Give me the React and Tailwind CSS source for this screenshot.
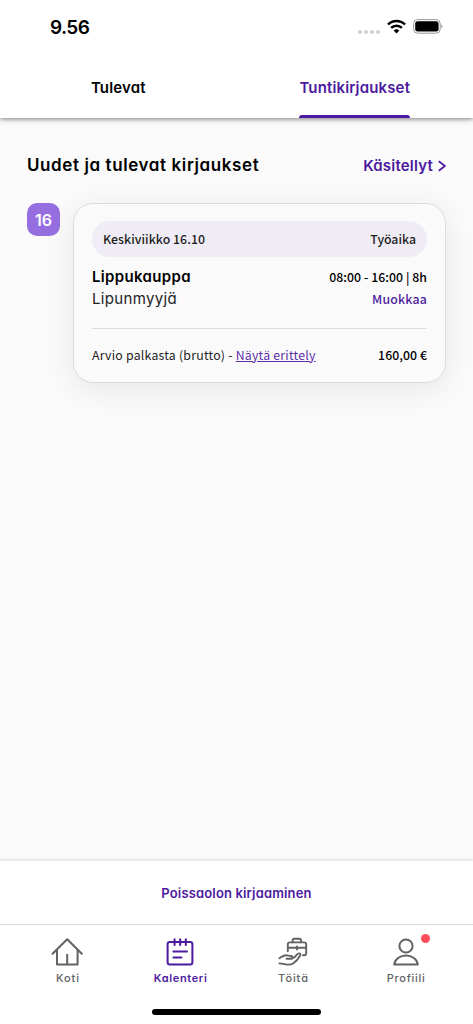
import React, { useState } from 'react';

const TABS = [
  { id: 'upcoming', label: 'Tulevat' },
  { id: 'entries', label: 'Tuntikirjaukset' }
];

const HomeIcon = () => (
  <svg width="32" height="28" viewBox="0 0 32 28" fill="none" stroke="currentColor" strokeWidth="2" strokeLinecap="round" strokeLinejoin="round">
    <path d="M1.6 15.8 16.2 1.2 30.8 15.8" />
    <path d="M6 12v14.4h20.6V12" />
    <path d="M16.2 16.8v9.4" />
  </svg>
);

const CalendarIcon = () => (
  <svg width="28" height="28" viewBox="0 0 28 28" fill="none" stroke="currentColor" strokeWidth="2" strokeLinecap="round" strokeLinejoin="round">
    <rect x="1.6" y="4" width="24.8" height="22.4" rx="2.2" />
    <path d="M8.6 1.2v5.8M14.2 1.2v5.8M19.8 1.2v5.8" />
    <path d="M7.4 13.6h13.6M7.4 19.4h8" />
  </svg>
);

const WorkIcon = () => (
  <svg width="30" height="30" viewBox="0 0 30 30" fill="none" stroke="currentColor" strokeWidth="1.9" strokeLinecap="round" strokeLinejoin="round">
    <path d="M9.8 14.2V7.4a2 2 0 0 1 2-2h14.4a2 2 0 0 1 2 2v8.8a2 2 0 0 1-2 2H25" />
    <path d="M14.6 5.2V3.4a1.6 1.6 0 0 1 1.6-1.6h5.2A1.6 1.6 0 0 1 23 3.4v1.8" />
    <path d="M10 10.8h18M19 9.4v3" />
    <path d="M1.4 21.2c2.6-1.8 4.4-3 6.8-3 2 0 2.6.8 5 .8 1.6 0 1.8 2.8-.8 2.8H8.6" />
    <path d="M13.8 21.6c2-.6 3.2-1.6 4.2-3 1.2-1.8 2.2-2.4 3.4-2.2 1.2.2 1.2 1.4.6 2.4-1.8 3.4-3.8 5.6-6.6 7.4-2.6 1.6-4.6 1.8-7.6 1.2-2-.4-3.8-1-6.4-1" />
  </svg>
);

const ProfileIcon = () => (
  <svg width="26" height="28" viewBox="0 0 26 28" fill="none" stroke="currentColor" strokeWidth="2" strokeLinejoin="round">
    <circle cx="13" cy="8" r="6.6" />
    <path d="M1.2 26.4C2 21.2 6.8 17.6 13 17.6s11 3.6 11.8 8.8z" />
  </svg>
);

const NAV_ITEMS = [
  { id: 'home', label: 'Koti', icon: HomeIcon, text: 'font-medium tracking-[0.9px]' },
  { id: 'calendar', label: 'Kalenteri', icon: CalendarIcon, text: 'font-semibold tracking-[0.65px]' },
  { id: 'work', label: 'Töitä', icon: WorkIcon, text: 'font-medium tracking-[0.9px]' },
  { id: 'profile', label: 'Profiili', icon: ProfileIcon, text: 'font-medium tracking-[0.7px]', badge: true }
];

const StatusBar = () => (
  <div className="h-[58px] shrink-0 flex items-start justify-between pl-[50px] pr-[30px]">
    <span className="mt-[14px] font-['Inter',sans-serif] text-[19px] leading-7 font-semibold tracking-[-0.6px] text-black">9.56</span>
    <div className="mt-[19px] flex items-center">
      <svg width="22" height="4" viewBox="0 0 22 4" className="mt-[10px]" fill="#cfcfcf">
        <circle cx="2" cy="2" r="2" />
        <circle cx="8" cy="2" r="2" />
        <circle cx="14" cy="2" r="2" />
        <circle cx="20" cy="2" r="2" />
      </svg>
      <svg width="19" height="15" viewBox="0 0 18 14" className="ml-[7px]" fill="none" stroke="#000" strokeWidth="2.3">
        <path d="M.9 5.1a11.6 11.6 0 0 1 16.2 0" />
        <path d="M3.9 8.4a7.3 7.3 0 0 1 10.2 0" />
        <path d="M6.3 10.9a3.9 3.9 0 0 1 5.4 0L9 13.7z" fill="#000" stroke="none" />
      </svg>
      <svg width="30" height="15" viewBox="0 0 30 15" className="ml-[7px]">
        <rect x=".6" y=".6" width="26.6" height="13.6" rx="4" fill="none" stroke="#999" />
        <rect x="2.2" y="2.2" width="23.4" height="10.4" rx="2.4" fill="#000" />
        <path d="M28.4 5.2v4.4c1.6-.8 1.6-3.6 0-4.4z" fill="#999" />
      </svg>
    </div>
  </div>
);

const EntryCard = ({ entry }) => (
  <div className="w-[373px] h-[180px] rounded-[20px] border border-[#dcdcdc] bg-[#fafafa] px-[18px] pt-[17px] shadow-[0_6px_30px_rgba(0,0,0,0.08)] font-['Noto_Sans_CJK_JP',sans-serif] text-[12.3px]">
    <div className="h-[36px] rounded-full bg-[#f0ecf6] px-[11px] flex items-center justify-between font-medium text-[#1c1c1c]">
      <span className="tracking-[0.05px]">{entry.date}</span>
      <span>{entry.type}</span>
    </div>
    <div className="mt-[9px] h-[22px] flex items-center justify-between">
      <span className="font-['Inter',sans-serif] text-[15px] font-semibold tracking-[0.35px] text-black">{entry.place}</span>
      <span className="font-medium tracking-[0.05px] text-black">{entry.time}</span>
    </div>
    <div className="h-[22px] flex items-center justify-between">
      <span className="font-['Inter',sans-serif] text-[15px] tracking-[0.35px] text-[#222]">{entry.role}</span>
      <button className="font-medium tracking-[0.2px] text-[#4c1a9e]">Muokkaa</button>
    </div>
    <div className="mt-[18px] border-t border-[#dedede]" />
    <div className="mt-[15px] h-[22px] flex items-center justify-between">
      <span className="tracking-[0.23px] text-[#222]">
        Arvio palkasta (brutto) - <a className="text-[#5c2fa8] underline">Näytä erittely</a>
      </span>
      <span className="font-medium tracking-[0.05px] text-black">{entry.pay}</span>
    </div>
  </div>
);

const App = () => {
  const [activeTab, setActiveTab] = useState('entries');
  const [activeNav, setActiveNav] = useState('calendar');

  const entry = {
    day: 16,
    date: 'Keskiviikko 16.10',
    type: 'Työaika',
    place: 'Lippukauppa',
    role: 'Lipunmyyjä',
    time: '08:00 - 16:00 | 8h',
    pay: '160,00 €'
  };

  return (
    <div className="h-screen w-full flex flex-col overflow-hidden bg-[#fafafa] font-['Inter',sans-serif] [font-feature-settings:'cv11']">
      {/* Header */}
      <header className="relative h-[118px] shrink-0 flex flex-col bg-white shadow-[0_1px_5px_rgba(0,0,0,0.5)]">
        <StatusBar />
        <div className="flex-1 grid grid-cols-2">
          {TABS.map(tab => {
            const active = tab.id === activeTab;
            return (
              <button key={tab.id} onClick={() => setActiveTab(tab.id)} className="flex justify-center">
                <span
                  className={`h-full flex flex-col justify-between pt-[18px] text-[15px] leading-6 font-semibold tracking-[0.15px] ${
                    active ? 'text-[#4c1a9e]' : 'text-black'
                  }`}
                >
                  {tab.label}
                  {active && <span className="h-[3px] rounded-t-[3px] bg-[#4c1a9e]" />}
                </span>
              </button>
            );
          })}
        </div>
      </header>

      {/* Entries */}
      <main className="flex-1 px-[27px] pt-[34px]">
        <div className="h-7 flex items-center justify-between">
          <h1 className="text-[17px] font-semibold tracking-[0.6px] text-black whitespace-nowrap">Uudet ja tulevat kirjaukset</h1>
          <button className="flex items-center text-[15px] font-semibold tracking-[0.2px] text-[#4c1a9e]">
            Käsitellyt
            <svg width="8" height="12" viewBox="0 0 8 12" className="ml-[5px]" fill="none" stroke="currentColor" strokeWidth="1.8">
              <path d="M.8 1.2 7 6 .8 10.8" />
            </svg>
          </button>
        </div>
        <div className="mt-[23px] flex items-start justify-between">
          <div className="w-[33px] h-[33px] rounded-[10px] bg-[#966ee0] flex items-center justify-center text-[16px] font-semibold text-white">
            {entry.day}
          </div>
          <EntryCard entry={entry} />
        </div>
      </main>

      {/* Absence button */}
      <div className="h-[63px] shrink-0 flex items-center justify-center bg-white pt-[2px] shadow-[0_-1px_4px_rgba(0,0,0,0.12)]">
        <button className="text-[13px] font-semibold tracking-[0.15px] text-[#4c1a9e]">Poissaolon kirjaaminen</button>
      </div>

      {/* Bottom navigation */}
      <nav className="h-[100px] shrink-0 flex flex-col justify-between border-t border-[#d8d8d8] bg-white pb-[9px]">
        <div className="pt-[12px] pl-[11px] pr-[11px] grid grid-cols-4">
          {NAV_ITEMS.map(item => {
            const Icon = item.icon;
            return (
              <button
                key={item.id}
                onClick={() => setActiveNav(item.id)}
                className={`flex flex-col items-center ${item.id === activeNav ? 'text-[#4c1a9e]' : 'text-[#606265]'}`}
              >
                <span className="relative h-[30px] flex items-center">
                  <Icon />
                  {item.badge && <span className="absolute -right-[11px] -top-[3px] size-[9px] rounded-full bg-[#ff4d5a]" />}
                </span>
                <span className={`mt-[3px] pl-px text-[11px] leading-4 ${item.text}`}>{item.label}</span>
              </button>
            );
          })}
        </div>
        <div className="self-center w-[169px] h-[6px] rounded-full bg-black" />
      </nav>
    </div>
  );
};

export default App;
